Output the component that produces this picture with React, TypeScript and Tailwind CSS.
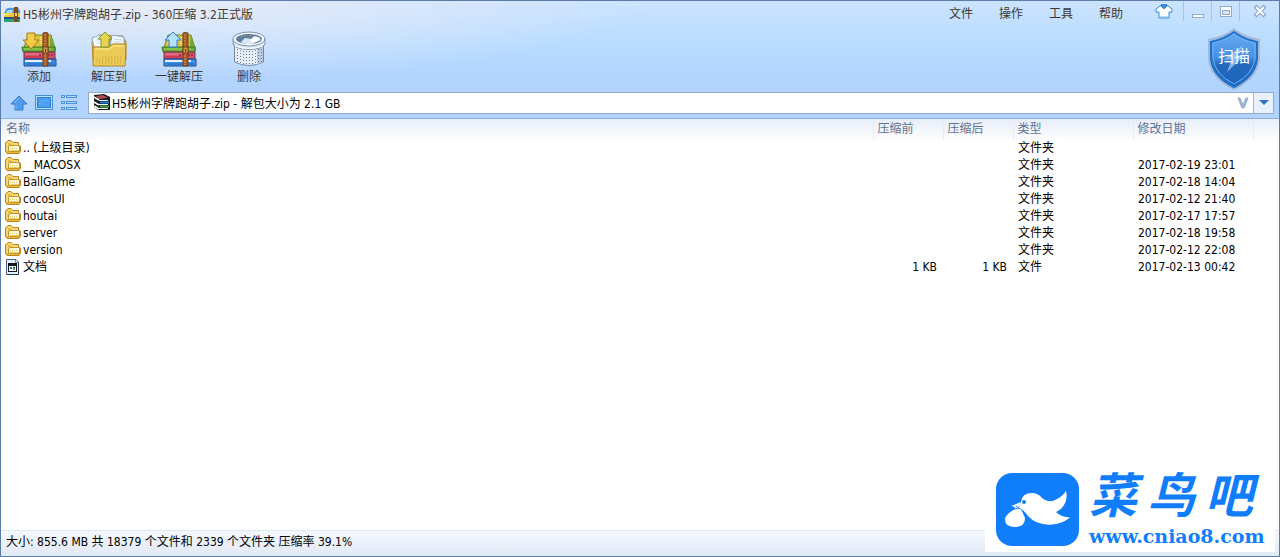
import React from "react";

type Entry = {
  name: string;
  kind: "folder" | "file";
  before: string;
  after: string;
  type: string;
  date: string;
};

const entries: Entry[] = [
  { name: ".. (上级目录)", kind: "folder", before: "", after: "", type: "文件夹", date: "" },
  { name: "__MACOSX", kind: "folder", before: "", after: "", type: "文件夹", date: "2017-02-19 23:01" },
  { name: "BallGame", kind: "folder", before: "", after: "", type: "文件夹", date: "2017-02-18 14:04" },
  { name: "cocosUI", kind: "folder", before: "", after: "", type: "文件夹", date: "2017-02-12 21:40" },
  { name: "houtai", kind: "folder", before: "", after: "", type: "文件夹", date: "2017-02-17 17:57" },
  { name: "server", kind: "folder", before: "", after: "", type: "文件夹", date: "2017-02-18 19:58" },
  { name: "version", kind: "folder", before: "", after: "", type: "文件夹", date: "2017-02-12 22:08" },
  { name: "文档", kind: "file", before: "1 KB", after: "1 KB", type: "文件", date: "2017-02-13 00:42" },
];

const menus = ["文件", "操作", "工具", "帮助"];
const headers = ["名称", "压缩前", "压缩后", "类型", "修改日期", ""];

function AppIcon() {
  return (
    <svg width="16" height="16" viewBox="0 0 16 16" aria-hidden="true">
      <path d="M0 7 L2 2 Q5 0 9 1 L14 1 L16 4 V8 H0Z" fill="#4a93e0" />
      <path d="M2 5 Q4 2 9 3 L8 6 H2Z" fill="#a9dcff" />
      <rect y="6" width="16" height="5" fill="#f0c736" />
      <rect y="7" width="6" height="1" fill="#fff0a0" />
      <rect y="10" width="16" height="2" fill="#27518c" />
      <rect y="12" width="16" height="3" fill="#2fa07c" />
      <rect x="10" y="0" width="4" height="15" fill="#854819" />
      <rect x="11" y="6" width="2" height="3" fill="#f7d862" />
    </svg>
  );
}

function BooksIcon({ up = false }: { up?: boolean }) {
  return (
    <svg width="38" height="36" viewBox="0 0 38 36" aria-hidden="true">
      <path d="M4 17 L8 4 H31 L35 17Z" fill="#dcc238" stroke="#6c8b28" />
      <path d="M30 5 L36 17 V20 H30Z" fill="#76a833" />
      <path d="M8 13 L11 7 M14 13 L16 6 M21 13 V6" stroke="#f8e779" strokeWidth="2" strokeDasharray="1 1" />
      <path d="M2 16 H35 V21 H3Z" fill="#66ad38" stroke="#3c7b22" />
      <path d="M4 18 H31" stroke="#a9da54" />
      <path d="M4 21 H35 V28 H4Z" fill="#d6516a" stroke="#753044" />
      <path d="M5 23 H22" stroke="#e58d99" />
      <path d="M5 26 H22" stroke="#c93a58" strokeWidth="2" />
      <path d="M19 24 H34" stroke="#b42d50" strokeWidth="2" strokeDasharray="2 1" />
      <path d="M4 28 H36 V35 H4Z" fill="#3c8ee1" stroke="#234b95" />
      <path d="M5 30 H31" stroke="#e8f1f9" strokeWidth="2" />
      <path d="M7 33 H34" stroke="#1e65bd" />
      <path d="M23 2 Q25 1 28 2 V35 H23Z" fill="#a65b2b" stroke="#704020" />
      <path d="M25 3 V34" stroke="#d9955b" strokeDasharray="2 1" />
      <rect x="23" y="16" width="5" height="6" fill="#d2994c" stroke="#704020" />
      <rect x="25" y="18" width="1" height="3" fill="#5e3c21" />
      {up ? (
        <path d="M13 1 L21 9 H17 V16 H9 V9 H5Z" fill="#b7e2ff" stroke="#2b7ddc" strokeLinejoin="round" />
      ) : (
        <path d="M7 2 H15 V9 H19 L11 18 L3 9 H7Z" fill="#f0cc49" stroke="#ad761b" strokeLinejoin="round" />
      )}
    </svg>
  );
}

function ExtractIcon() {
  return (
    <svg width="38" height="36" viewBox="0 0 38 36" aria-hidden="true">
      <path d="M2 10 L9 4 L33 5 L36 11 V29 H3Z" fill="#d7a93d" stroke="#b88b2d" />
      <path d="M2 7 L11 4 L15 16 H4Z" fill="#f7fbff" stroke="#8eafd7" />
      <path d="M22 4 L34 6 V16 H20Z" fill="#edf5ff" stroke="#8cadd7" />
      <path d="M24 8 L32 9 M24 11 H31 M6 9 H11 M7 12 H11" stroke="#c2d8ef" />
      <path d="M3 16 H19 L22 13 H36 L35 35 H3Z" fill="#ebca55" stroke="#b78228" />
      <path d="M5 18 H20 L23 15 H34" fill="none" stroke="#fff09a" />
      <path d="M6 30 H33 M9 32 H33 M7 28 H32 M12 26 H33" stroke="#c99a35" strokeDasharray="1 2" />
      <path d="M15 1 L22 8 H19 V16 H11 V8 H8Z" fill="#ecd44c" stroke="#769734" strokeLinejoin="round" />
    </svg>
  );
}

function BinIcon() {
  return (
    <svg width="38" height="36" viewBox="0 0 38 36" aria-hidden="true">
      <path d="M4.5 11 V31 Q19 38 33.5 31 V11Z" fill="#e9f0f9" stroke="#7088a8" />
      <path d="M27 16 H33 V31 L27 33Z" fill="#bccce0" />
      <g stroke="#5f7798" strokeDasharray="1 2">
        <path d="M7.5 18 V32 M10.5 19 V33 M13.5 20 V33 M16.5 20 V34 M19.5 20 V34 M22.5 20 V34 M25.5 19 V33 M28.5 18 V32 M31.5 18 V31" />
      </g>
      <path d="M3 8 V13 Q5 18 19 18.500 Q33 18 35 13 V8Z" fill="#dfe9f6" stroke="#7891b3" />
      <ellipse cx="19" cy="8" rx="16" ry="7" fill="#f8fbff" stroke="#7891b3" />
      <ellipse cx="19" cy="8" rx="13" ry="5" fill="#617da0" />
      <path d="M11 11 L15 7 L21 8 L24 5 L29 6 L31 9 L22 13 H15Z" fill="#d8eafa" />
      <path d="M20 9 L25 6 L29 7 L28 10 L22 12Z" fill="#ffffff" />
      <path d="M11 5 H17 M20 5 H23" stroke="#d0a54c" strokeDasharray="1 2" />
      <path d="M5 15 Q19 20 33 15" fill="none" stroke="#ffffff" />
    </svg>
  );
}

function ArchiveIcon() {
  return (
    <svg width="17" height="17" viewBox="0 0 17 17" aria-hidden="true">
      <path d="M1 1 L11 0 L17 3 V16 H5 L1 13Z" fill="#101720" />
      <path d="M3 2 L10 1 L15 4 L6 5Z" fill="#b5485a" />
      <path d="M1 3 L6 6 M1 8 L6 11 M1 12 L6 15" stroke="#eef3ec" strokeWidth="2" />
      <path d="M6 6.500 H15 M6 10.500 H15 M6 14.500 H15" stroke="#eef3ec" />
      <path d="M7 8.500 H16" stroke="#2678d8" strokeWidth="2" />
      <path d="M7 12.500 H16" stroke="#4ba83c" strokeWidth="2" />
    </svg>
  );
}

function FolderIcon() {
  return (
    <svg className="shrink-0" width="16" height="14" viewBox="0 0 16 14" aria-hidden="true">
      <path d="M.5 11 V3 L3 .5 H6 L8 2.500 H13.5 V6 H15.5 V11 L14 13.500 H2Z" fill="#e8bb3e" stroke="#ba831f" />
      <path d="M2 11 V3.500 L3.500 2 H5.500 L8 4 H12.500 V5" fill="none" stroke="#fff4b0" />
      <path d="M3.500 11.500 V7 L5 5.500 H14.500 V11.500Z" fill="#fffbe0" stroke="#c7942b" />
      <path d="M5 8.500 H13" stroke="#e8cc5c" strokeDasharray="1 1" />
      <path d="M5 10.500 H14" stroke="#ead05f" />
    </svg>
  );
}

function FileIcon() {
  return (
    <svg className="shrink-0" width="16" height="16" viewBox="0 0 16 16" aria-hidden="true">
      <path d="M1.5 .5 H11 L13.5 3 V15.5 H1.5Z" fill="#e3eefc" stroke="#46648e" />
      <path d="M10.5 1 V3.5 H13" fill="#ffffff" stroke="#6886a8" />
      <path d="M13.5 4 V15.5 H2" fill="none" stroke="#26374e" />
      <rect x="3.5" y="4.500" width="8" height="8" fill="#ffffff" stroke="#111820" />
      <path d="M3 6 H12" stroke="#111820" strokeWidth="2" />
      <rect x="5" y="8" width="2" height="2" fill="#2c639f" />
      <rect x="8" y="9" width="2" height="2" fill="#40a245" />
      <rect x="8" y="8" width="2" height="1" fill="#222c35" />
    </svg>
  );
}

function ShirtIcon() {
  return (
    <svg width="18" height="16" viewBox="0 0 18 16" aria-hidden="true">
      <path d="M5 2 L1 5 V8 H4 V14 H14 V8 H17 V5 L13 2 L11 1 H7Z" fill="#ffffff" stroke="#328de0" strokeLinejoin="round" />
      <path d="M6 1 Q9 8 12 1Z" fill="#3d98e8" stroke="#176ec3" />
      <path d="M5 13 H13" stroke="#78bbee" />
    </svg>
  );
}

function ShieldIcon() {
  return (
    <svg width="54" height="64" viewBox="0 0 54 64" aria-hidden="true">
      <defs>
        <linearGradient id="shield-fill" x1="0" y1="0" x2="0" y2="1">
          <stop offset="0" stopColor="#66aaf2" />
          <stop offset="0.45" stopColor="#4a90e2" />
          <stop offset="0.6" stopColor="#2468bd" />
          <stop offset="1" stopColor="#1d66bd" />
        </linearGradient>
      </defs>
      <path d="M27 1 Q18 9 1 12 V32 Q3 52 27 63 Q51 52 53 32 V12 Q36 9 27 1Z" fill="#a5b9d6" />
      <path d="M27 5 Q18 12 4 15 V32 Q6 50 27 60 Q48 50 50 32 V15 Q36 12 27 5Z" fill="url(#shield-fill)" stroke="#1d72cc" strokeWidth="2" />
      <path d="M27 7 Q18 14 6 16 V31 Q8 48 27 57 Q46 48 48 31 V16 Q36 14 27 7Z" fill="none" stroke="#72b3ef" />
      <path d="M36 18 L17 33 L25 32 L20 45 L38 28 L30 29Z" fill="#a6cdf5" opacity=".75" />
    </svg>
  );
}

function BirdLogo() {
  return (
    <svg className="shrink-0" width="83" height="73" viewBox="0 0 83 73" aria-hidden="true">
      <rect width="83" height="73" rx="16" fill="#107efa" />
      <path
        d="M25 29 Q26 20 36 20 Q42 20 46 25 Q51 30 58 27 Q66 24 70 18 Q72 26 68 32 Q65 37 60 39 Q66 45 74 44 Q70 49 60 51 Q42 54 32 43 Q27 36 23 35Z"
        fill="#ffffff"
      />
      <path d="M50 26 Q58 25 64 18 M55 28 Q65 25 68 19" fill="none" stroke="#107efa" />
      <circle cx="28" cy="29" r="2" fill="#107efa" />
      <path d="M25 29 Q20 31 15 33 Q19 33 19 36 Q10 41 9 46 Q9 54 19 54 Q29 54 29 45 Q26 37 23 34Z" fill="#ffffff" />
      <path d="M20 33 L24 36 M18 36 L23 35" stroke="#107efa" />
    </svg>
  );
}

const tools = [
  { label: "添加", icon: <BooksIcon /> },
  { label: "解压到", icon: <ExtractIcon /> },
  { label: "一键解压", icon: <BooksIcon up /> },
  { label: "删除", icon: <BinIcon /> },
];

export default function App() {
  return (
    <main className="relative flex min-h-screen flex-col overflow-hidden border border-[#5b7ba8] bg-white font-['DejaVu_Sans_Condensed','Noto_Sans_CJK_SC',sans-serif] text-xs text-black">
      <header className="border-b border-[#91aeda] bg-[radial-gradient(ellipse_520px_80px_at_130px_0px,#e8ecf8,transparent),linear-gradient(to_bottom,#cbe3ff,#b9dcff_35%,#b3d4ff_65%)]">
        <div className="flex h-[26px] items-start pl-[3px] text-[#40382f]">
          <h1 className="flex h-7 items-center gap-[3px] font-normal whitespace-nowrap">
            <AppIcon />
            H5彬州字牌跑胡子.zip - 360压缩 3.2正式版
          </h1>
          <nav className="ml-auto flex">
            {menus.map((menu) => (
              <button key={menu} className="h-[26px] w-[50px]">{menu}</button>
            ))}
          </nav>
          <button aria-label="皮肤" className="mr-px ml-2.5 flex h-[22px] w-9 items-center justify-center">
            <ShirtIcon />
          </button>
          <button aria-label="最小化" className="flex h-5 w-7 items-center justify-center border-l border-[#a9c2e4]">
            <svg width="14" height="16" viewBox="0 0 14 16" aria-hidden="true">
              <rect x="1.5" y="11.5" width="11" height="3" fill="#fff" stroke="#92a9ca" />
            </svg>
          </button>
          <button aria-label="最大化" className="flex h-5 w-7 items-center justify-center border-l border-[#a9c2e4]">
            <svg width="14" height="14" viewBox="0 0 14 14" aria-hidden="true">
              <rect x="1.5" y="2.500" width="11" height="10" fill="#fff" stroke="#92a9ca" />
              <rect x="3.5" y="6.500" width="7" height="4" fill="#d3e5fc" stroke="#92a9ca" />
            </svg>
          </button>
          <button aria-label="关闭" className="flex h-5 w-10 items-center justify-center border-l border-[#a9c2e4]">
            <svg width="14" height="14" viewBox="0 0 14 14" aria-hidden="true">
              <path d="M2 2 L12 12 M12 2 L2 12" stroke="#8da7ca" strokeWidth="4" />
              <path d="M3 3 L11 11 M11 3 L3 11" stroke="#ffffff" strokeWidth="2" />
            </svg>
          </button>
        </div>
        <div className="flex h-16 items-start pr-[18px] pl-[3px] text-[#40382f]">
          {tools.map((tool) => (
            <button key={tool.label} className="flex w-[70px] flex-col items-center pt-1 whitespace-nowrap">
              {tool.icon}
              <span className="leading-5">{tool.label}</span>
            </button>
          ))}
          <button className="relative ml-auto">
            <ShieldIcon />
            <span className="absolute inset-0 flex items-center justify-center pb-1 text-base text-white">扫描</span>
          </button>
        </div>
        <div className="flex h-[27px] items-center pr-[5px] pb-1 pl-[9px]">
          <button aria-label="上一级" className="w-[25px]">
            <svg width="18" height="18" viewBox="0 0 18 18" aria-hidden="true">
              <path d="M9 2 L17 10 H13 V16 H5 V10 H1Z" fill="#529bec" stroke="#317bca" strokeLinejoin="round" />
              <path d="M6 11 V15 M4 9 L9 4" stroke="#87c0fa" />
            </svg>
          </button>
          <button aria-label="预览" className="w-[25px]">
            <svg width="18" height="18" viewBox="0 0 18 18" aria-hidden="true">
              <rect x=".5" y="1.500" width="17" height="14" fill="#b6deff" stroke="#438fd7" />
              <rect x="2.5" y="3.500" width="13" height="10" fill="#4e9eee" stroke="#317fca" />
              <path d="M4 10 L8 6 M6 11 L12 5" stroke="#81c1fb" strokeDasharray="1 1" />
            </svg>
          </button>
          <button aria-label="列表" className="w-[28px]">
            <svg width="18" height="18" viewBox="0 0 18 18" aria-hidden="true">
              {[1.5, 7.5, 13.5].map((y) => (
                <React.Fragment key={y}>
                  <rect x="1.500" y={y} width="3" height="2" fill="#b4d9ff" stroke="#4e91dc" />
                  <rect x="6.5" y={y} width="10" height="2" fill="#b4d9ff" stroke="#4e91dc" />
                </React.Fragment>
              ))}
            </svg>
          </button>
          <div className="flex h-[22px] grow items-center border border-[#91aacd] bg-white">
            <label htmlFor="path" className="pl-1"><ArchiveIcon /></label>
            <input
              id="path"
              aria-label="路径"
              readOnly
              value="H5彬州字牌跑胡子.zip - 解包大小为 2.1 GB"
              className="ml-0.5 h-full min-w-0 grow bg-transparent outline-none"
            />
            <svg className="mr-1" width="12" height="12" viewBox="0 0 12 12" aria-hidden="true">
              <path d="M1 1 H3 L6 8 L9 1 H11 L7 11 H5Z" fill="#9fb8d9" stroke="#91aacd" />
            </svg>
            <button aria-label="展开" className="flex h-5 w-5 items-center justify-center border-l border-[#9bb7da] bg-[#e8f1fd]">
              <svg width="10" height="6" viewBox="0 0 10 6" aria-hidden="true">
                <path d="M0 0 H10 L5 5Z" fill="#2f75c4" />
              </svg>
            </button>
          </div>
        </div>
      </header>

      <div className="grow">
        <table className="w-full table-fixed border-collapse">
          <colgroup>
            <col />
            <col className="w-[70px]" />
            <col className="w-[70px]" />
            <col className="w-[120px]" />
            <col className="w-[120px]" />
            <col className="w-[26px]" />
          </colgroup>
          <thead className="bg-linear-to-b from-[#e7eefa] via-[#f3f5fa] to-[#fdfdfe] text-[#5c7393]">
            <tr>
              {headers.map((header, index) => (
                <th key={index} scope="col" className="h-[21px] border-r border-[#e6edf8] p-0 pl-1 text-left leading-[21px] font-normal first:pl-[5px] last:border-r-0">
                  {header}
                </th>
              ))}
            </tr>
          </thead>
          <tbody>
            {entries.map((entry) => (
              <tr key={entry.name} className="h-[17px] leading-[17px] whitespace-nowrap">
                <td className="p-0 pl-1">
                  <div className="flex h-[17px] items-start gap-0.5">
                    {entry.kind === "folder" ? <FolderIcon /> : <FileIcon />}
                    {entry.name}
                  </div>
                </td>
                <td className="p-0 pr-1.5 text-right">{entry.before}</td>
                <td className="p-0 pr-1.5 text-right">{entry.after}</td>
                <td className="p-0 pl-[5px]">{entry.type}</td>
                <td className="p-0 pl-[5px]">{entry.date}</td>
                <td className="p-0" />
              </tr>
            ))}
          </tbody>
        </table>
      </div>

      <footer className="flex h-[26px] items-center border-t border-[#dce8f7] bg-linear-to-b from-[#f5f8fd] to-[#e1e9f6] pb-1 pl-[5px]">
        大小: 855.6 MB 共 18379 个文件和 2339 个文件夹 压缩率 39.1%
      </footer>

      <aside className="absolute right-1 bottom-1 flex h-[90px] w-[290px] items-center gap-2.5 bg-white pt-1 pl-[11px] text-[#107efa]">
        <BirdLogo />
        <div className="flex flex-col">
          <div className="flex gap-2.5 font-['Liberation_Sans','Noto_Sans_CJK_SC',sans-serif] text-[48px] leading-[54px] font-bold italic">
            <span>菜</span>
            <span>鸟</span>
            <span>吧</span>
          </div>
          <a href="#home" className="font-['DejaVu_Serif',serif] text-[19px] leading-6 font-bold">www.cniao8.com</a>
        </div>
      </aside>
    </main>
  );
}
